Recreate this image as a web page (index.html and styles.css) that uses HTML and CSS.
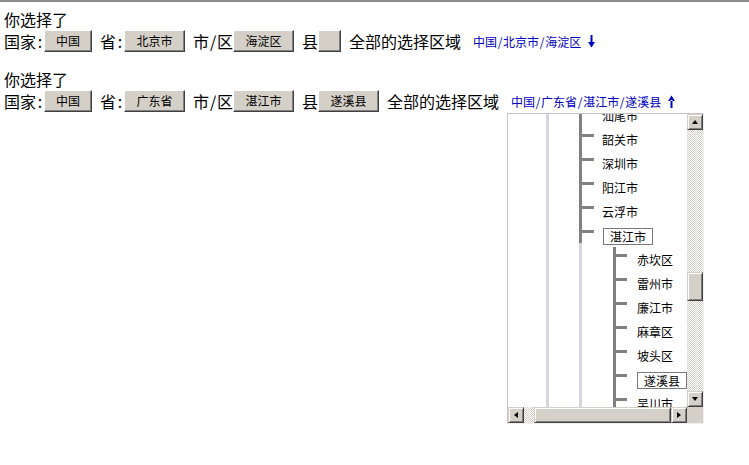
FILE: index.html
```html
<!DOCTYPE html>
<html lang="zh-CN">
<head>
<meta charset="utf-8">
<title>区域选择</title>
<link rel="stylesheet" href="styles.css">
</head>
<body>
<div class="page">
  <section class="block">
    <div class="title">你选择了</div>
    <div class="row">
      <span class="lbl">国家<span class="h">:</span></span>
      <button class="btn">中国</button>
      <span class="lbl">省<span class="h">:</span></span>
      <button class="btn w3">北京市</button>
      <span class="lbl">市<span class="h">/</span>区</span>
      <button class="btn w3">海淀区</button>
      <span class="lbl">县</span>
      <button class="btn empty"></button>
      <span class="lbl">全部的选择区域</span>
      <span class="sel">
        <a class="path">中国<span class="h">/</span>北京市<span class="h">/</span>海淀区</a>
        <svg class="arrow" viewBox="0 0 7 13" aria-hidden="true"><path d="M2.5 0h2v8h-2z M0 7h7l-3.5 5.5z" fill="#0000c0"/></svg>
      </span>
    </div>
  </section>
  <section class="block">
    <div class="title">你选择了</div>
    <div class="row">
      <span class="lbl">国家<span class="h">:</span></span>
      <button class="btn">中国</button>
      <span class="lbl">省<span class="h">:</span></span>
      <button class="btn w3">广东省</button>
      <span class="lbl">市<span class="h">/</span>区</span>
      <button class="btn w3">湛江市</button>
      <span class="lbl">县</span>
      <button class="btn w3">遂溪县</button>
      <span class="lbl">全部的选择区域</span>
      <span class="sel">
        <a class="path">中国<span class="h">/</span>广东省<span class="h">/</span>湛江市<span class="h">/</span>遂溪县</a>
        <svg class="arrow" viewBox="0 0 7 13" aria-hidden="true"><path d="M2.5 5h2v8h-2z M0 6h7l-3.5-5.5z" fill="#0000c0"/></svg>
        <div class="panel">
          <div class="viewport">
            <ul class="tree">
              <li class="item l2"><i class="conn"></i><span class="lab">汕尾市</span></li>
              <li class="item l2"><i class="conn"></i><span class="lab">韶关市</span></li>
              <li class="item l2"><i class="conn"></i><span class="lab">深圳市</span></li>
              <li class="item l2"><i class="conn"></i><span class="lab">阳江市</span></li>
              <li class="item l2"><i class="conn"></i><span class="lab">云浮市</span></li>
              <li class="item l2 last"><i class="conn"></i><span class="lab boxed">湛江市</span></li>
              <li class="item l3"><i class="conn"></i><span class="lab">赤坎区</span></li>
              <li class="item l3"><i class="conn"></i><span class="lab">雷州市</span></li>
              <li class="item l3"><i class="conn"></i><span class="lab">廉江市</span></li>
              <li class="item l3"><i class="conn"></i><span class="lab">麻章区</span></li>
              <li class="item l3"><i class="conn"></i><span class="lab">坡头区</span></li>
              <li class="item l3"><i class="conn"></i><span class="lab boxed">遂溪县</span></li>
              <li class="item l3"><i class="conn"></i><span class="lab">吴川市</span></li>
            </ul>
          </div>
          <div class="vscroll">
            <div class="sb-btn"><i class="tri up"></i></div>
            <div class="track"></div>
            <div class="thumb"></div>
            <div class="track"></div>
            <div class="sb-btn"><i class="tri down"></i></div>
          </div>
          <div class="hscroll">
            <div class="sb-btn"><i class="tri left"></i></div>
            <div class="track"></div>
            <div class="thumb"></div>
            <div class="sb-btn"><i class="tri right"></i></div>
          </div>
          <div class="corner"></div>
        </div>
      </span>
    </div>
  </section>
</div>
</body>
</html>
```
FILE: styles.css
```css
* { box-sizing: border-box; margin: 0; padding: 0; }
html, body { background: #fff; }
html { height: 100%; }
body {
  min-height: 100%;
  font-family: "Noto Sans CJK SC", "Noto Sans", sans-serif;
  font-size: 16px;
  color: #000;
  border-top: 2px solid #8a8a8a;
}
.page {
  display: flex;
  flex-direction: column;
  gap: 16px;
  padding: 7px 0 0 4px;
}
.title { height: 20px; line-height: 20px; }
.row {
  display: flex;
  align-items: center;
  height: 24px;
  white-space: nowrap;
}
.lbl { line-height: 24px; }
.h { display: inline-block; width: .5em; text-align: center; }

.btn {
  width: 48px;
  height: 22px;
  margin-right: 8px;
  padding: 0;
  font: 12px/20px "Noto Sans CJK SC", sans-serif;
  color: #000;
  background: #d4d0c8;
  border: 1px solid;
  border-color: #fff #404040 #404040 #fff;
  box-shadow: inset -1px -1px #808080;
}
.btn.w3 { width: 61px; }
.btn.empty { width: 23px; }

.sel {
  position: relative;
  align-self: stretch;
  display: flex;
  align-items: center;
  margin-left: 12px;
}
.path {
  color: #0000c0;
  font-size: 12px;
  text-decoration: none;
}
.arrow { width: 7px; height: 13px; margin-left: 7px; }

/* dropdown tree panel */
.panel {
  position: absolute;
  left: -4px;
  top: 100%;
  width: 197px;
  height: 311px;
  display: grid;
  grid-template-columns: 1fr 16px;
  grid-template-rows: 1fr 16px;
  background: #fff;
  border: 1px solid;
  border-color: #c4c4c4 #f0f0f0 #f0f0f0 #c4c4c4;
  z-index: 2;
}
.viewport {
  overflow: hidden;
  background:
    linear-gradient(#d6d6e0, #d6d6e0) 38px 0 / 3px 100% no-repeat,
    linear-gradient(#d6d6e0, #d6d6e0) 71px 0 / 3px 100% no-repeat,
    #fff;
}
.tree { list-style: none; margin-top: -11px; }
.item {
  display: flex;
  align-items: flex-start;
  height: 24px;
  font-size: 12px;
  white-space: nowrap;
}
.conn {
  flex: none;
  height: 24px;
  background:
    linear-gradient(#808080, #808080) 0 0 / 3px 100% no-repeat,
    linear-gradient(#808080, #808080) 3px 7px / 100% 3px no-repeat;
}
.l2 { padding-left: 71px; }
.l2 .conn { width: 15px; }
.l2 .lab { margin-left: 8px; }
.l2 .lab.boxed { margin-left: 9px; }
.l2.last .conn {
  background:
    linear-gradient(#808080, #808080) 0 0 / 3px 20px no-repeat,
    linear-gradient(#808080, #808080) 3px 7px / 100% 3px no-repeat;
}
.l3 { padding-left: 105px; }
.l3 .conn { width: 14px; }
.l3 .lab { margin-left: 10px; }
.lab { line-height: 14px; margin-top: 6px; }
.lab.boxed {
  line-height: 15px;
  margin-top: 5px;
  padding: 0 6px;
  border: 1px solid #7a7a7a;
}

/* scrollbars */
.vscroll {
  display: grid;
  grid-template-rows: 16px 142px 29px 1fr 16px;
}
.hscroll {
  display: grid;
  grid-template-columns: 16px 10px 1fr 16px;
}
.track {
  background: repeating-conic-gradient(#d4d0c8 0 25%, #fff 0 50%) 0 0 / 2px 2px;
}
.sb-btn, .thumb {
  display: flex;
  align-items: center;
  justify-content: center;
  background: #d4d0c8;
  border: 1px solid;
  border-color: #d4d0c8 #404040 #404040 #d4d0c8;
  box-shadow: inset 1px 1px #fff, inset -1px -1px #808080;
}
.corner { background: #d4d0c8; }
.tri { width: 0; height: 0; border: 0 solid transparent; }
.tri.up { width: 1px; border-left-width: 3px; border-right-width: 3px; border-bottom: 4px solid #000; }
.tri.down { width: 1px; border-left-width: 3px; border-right-width: 3px; border-top: 4px solid #000; }
.tri.left { height: 1px; border-top-width: 3px; border-bottom-width: 3px; border-right: 4px solid #000; }
.tri.right { height: 1px; border-top-width: 3px; border-bottom-width: 3px; border-left: 4px solid #000; }
```
